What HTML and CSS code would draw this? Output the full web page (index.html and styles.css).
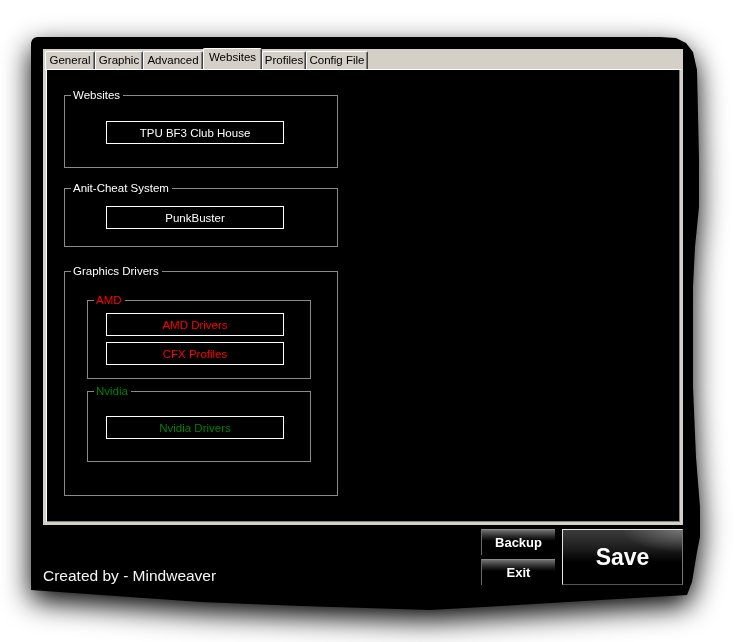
FILE: index.html
```html
<!DOCTYPE html>
<html lang="en">
<head>
    <meta charset="UTF-8">
    <title>BF3 Settings - Websites</title>
    <link rel="stylesheet" href="styles.css">
</head>
<body>
    <div class="frame">
        <div class="window">
            <div class="tab-control">
                <div class="tab-strip">
                    <span class="tab tab-general">General</span>
                    <span class="tab tab-graphic">Graphic</span>
                    <span class="tab tab-advanced">Advanced</span>
                    <span class="tab tab-websites selected">Websites</span>
                    <span class="tab tab-profiles">Profiles</span>
                    <span class="tab tab-config">Config File</span>
                </div>
                <div class="tab-page">
                    <fieldset class="group group-websites">
                        <legend>Websites</legend>
                        <button class="link-btn">TPU BF3 Club House</button>
                    </fieldset>

                    <fieldset class="group group-cheat">
                        <legend>Anit-Cheat System</legend>
                        <button class="link-btn">PunkBuster</button>
                    </fieldset>

                    <fieldset class="group group-drivers">
                        <legend>Graphics Drivers</legend>

                        <fieldset class="group sub-group group-amd">
                            <legend>AMD</legend>
                            <button class="link-btn">AMD Drivers</button>
                            <button class="link-btn">CFX Profiles</button>
                        </fieldset>

                        <fieldset class="group sub-group group-nvidia">
                            <legend>Nvidia</legend>
                            <button class="link-btn">Nvidia Drivers</button>
                        </fieldset>
                    </fieldset>
                </div>
            </div>

            <div class="footer">
                <p class="credit">Created by - Mindweaver</p>
                <div class="side-buttons">
                    <button class="btn-dark">Backup</button>
                    <button class="btn-dark">Exit</button>
                </div>
                <button class="btn-save">Save</button>
            </div>
        </div>
    </div>
</body>
</html>
```

FILE: styles.css
```css
html, body {
    margin: 0;
    background: #fff;
    font-family: "Liberation Sans", Arial, sans-serif;
}

/* torn paper look: the shadow sits on the wrapper, the shape is clipped on the window */
.frame {
    width: 734px;
    height: 642px;
    box-sizing: border-box;
    padding: 37px 0 0 31px;
    filter: drop-shadow(0 10px 14px #000);
}

.window {
    width: 671px;
    height: 575px;
    box-sizing: border-box;
    padding: 12px 0 0 12px;
    background: #000;
    clip-path: polygon(0 6px, 1px 3px, 3px 1px, 6px 0, 629px 0, 645px 1px, 655px 6px, 662px 15px,
        666px 33px, 668px 120px, 668px 170px, 664px 210px, 662px 250px, 662px 350px,
        665px 420px, 669px 470px, 669px 500px, 666px 515px, 661px 545px, 656px 558px,
        570px 563px, 470px 569px, 399px 573px, 270px 569px, 170px 565px, 70px 558px, 0 553px);
}

.tab-control {
    width: 640px;
}

.tab-strip {
    display: flex;
    align-items: flex-end;
    height: 20px;
    padding-left: 2px;
    background: #d4d0c8;
}

.tab {
    height: 18px;
    box-sizing: border-box;
    border-top: 1px solid #fff;
    border-left: 1px solid #fff;
    border-right: 1px solid #404040;
    border-radius: 2px 2px 0 0;
    box-shadow: inset -1px 0 #808080;
    background: #d4d0c8;
    color: #000;
    font-size: 11.5px;
    line-height: 17px;
    text-align: center;
}

.tab.selected {
    height: 21px;
    line-height: 16px;
}

.tab-general { width: 50px; }
.tab-graphic { width: 48px; }
.tab-advanced { width: 60px; }
.tab-websites { width: 59px; }
.tab-profiles { width: 44px; }
.tab-config { width: 62px; }

.tab-page {
    height: 456px;
    box-sizing: border-box;
    padding: 19px 0 0 18px;
    background: #000;
    border: 3px solid #d4d0c8;
    border-top: 1px solid #fff;
    box-shadow: inset 1px 0 #fff, inset -1px -1px #808080;
}

.group {
    width: 274px;
    box-sizing: border-box;
    min-width: 0;
    margin: 0;
    border: 1px solid #8a8a8a;
}

.group legend {
    margin-left: 6px;
    padding: 0 3px 0 2px;
    color: #fff;
    font-size: 11.5px;
    line-height: 13px;
}

.link-btn {
    display: block;
    width: 178px;
    height: 23px;
    margin: 0 0 0 41px;
    padding: 0;
    background: #000;
    border: 1px solid #fff;
    color: #fff;
    font-family: "Liberation Sans", Arial, sans-serif;
    font-size: 11.5px;
}

.group-websites {
    padding: 19px 0 23px;
}

.group-cheat {
    margin-top: 14px;
    padding: 11px 0 17px;
}

.group-drivers {
    margin-top: 18px;
    padding: 16px 0 33px;
}

.sub-group {
    width: 224px;
    margin-left: 22px;
}

.sub-group .link-btn {
    margin-left: 18px;
}

.group-amd {
    padding: 6px 0 13px;
}

.group-amd legend,
.group-amd .link-btn {
    color: #ff0000;
}

.group-amd .link-btn + .link-btn {
    margin-top: 6px;
}

.group-nvidia {
    margin-top: 6px;
    padding: 18px 0 22px;
}

.group-nvidia legend,
.group-nvidia .link-btn {
    color: #008000;
}

.footer {
    display: flex;
    width: 640px;
    height: 56px;
    margin-top: 4px;
}

.credit {
    flex: 1;
    align-self: flex-end;
    margin: 0;
    color: #f4f4f4;
    font-size: 15.5px;
    line-height: 18px;
}

.side-buttons {
    display: flex;
    flex-direction: column;
    gap: 4px;
    width: 74px;
    margin-right: 7px;
}

.btn-dark {
    height: 26px;
    padding: 0;
    border: none;
    border-top: 1px solid #8a8a8a;
    border-left: 1px solid #6a6a6a;
    background: linear-gradient(to bottom, #707070 0, #2e2e2e 6px, #000 11px);
    color: #fff;
    font-family: "Liberation Sans", Arial, sans-serif;
    font-size: 13px;
    font-weight: bold;
}

.btn-save {
    width: 121px;
    height: 56px;
    padding: 0;
    border: 1px solid #e6e6e6;
    border-right-color: #777;
    border-bottom-color: #555;
    background:
        radial-gradient(ellipse 60px 22px at 100% 0, rgba(140, 140, 140, 0.7), rgba(0, 0, 0, 0)),
        linear-gradient(to bottom, #3c3c3c 0, #1c1c1c 35%, #000 60%);
    color: #fff;
    font-family: "Liberation Sans", Arial, sans-serif;
    font-size: 23px;
    font-weight: bold;
}
```
